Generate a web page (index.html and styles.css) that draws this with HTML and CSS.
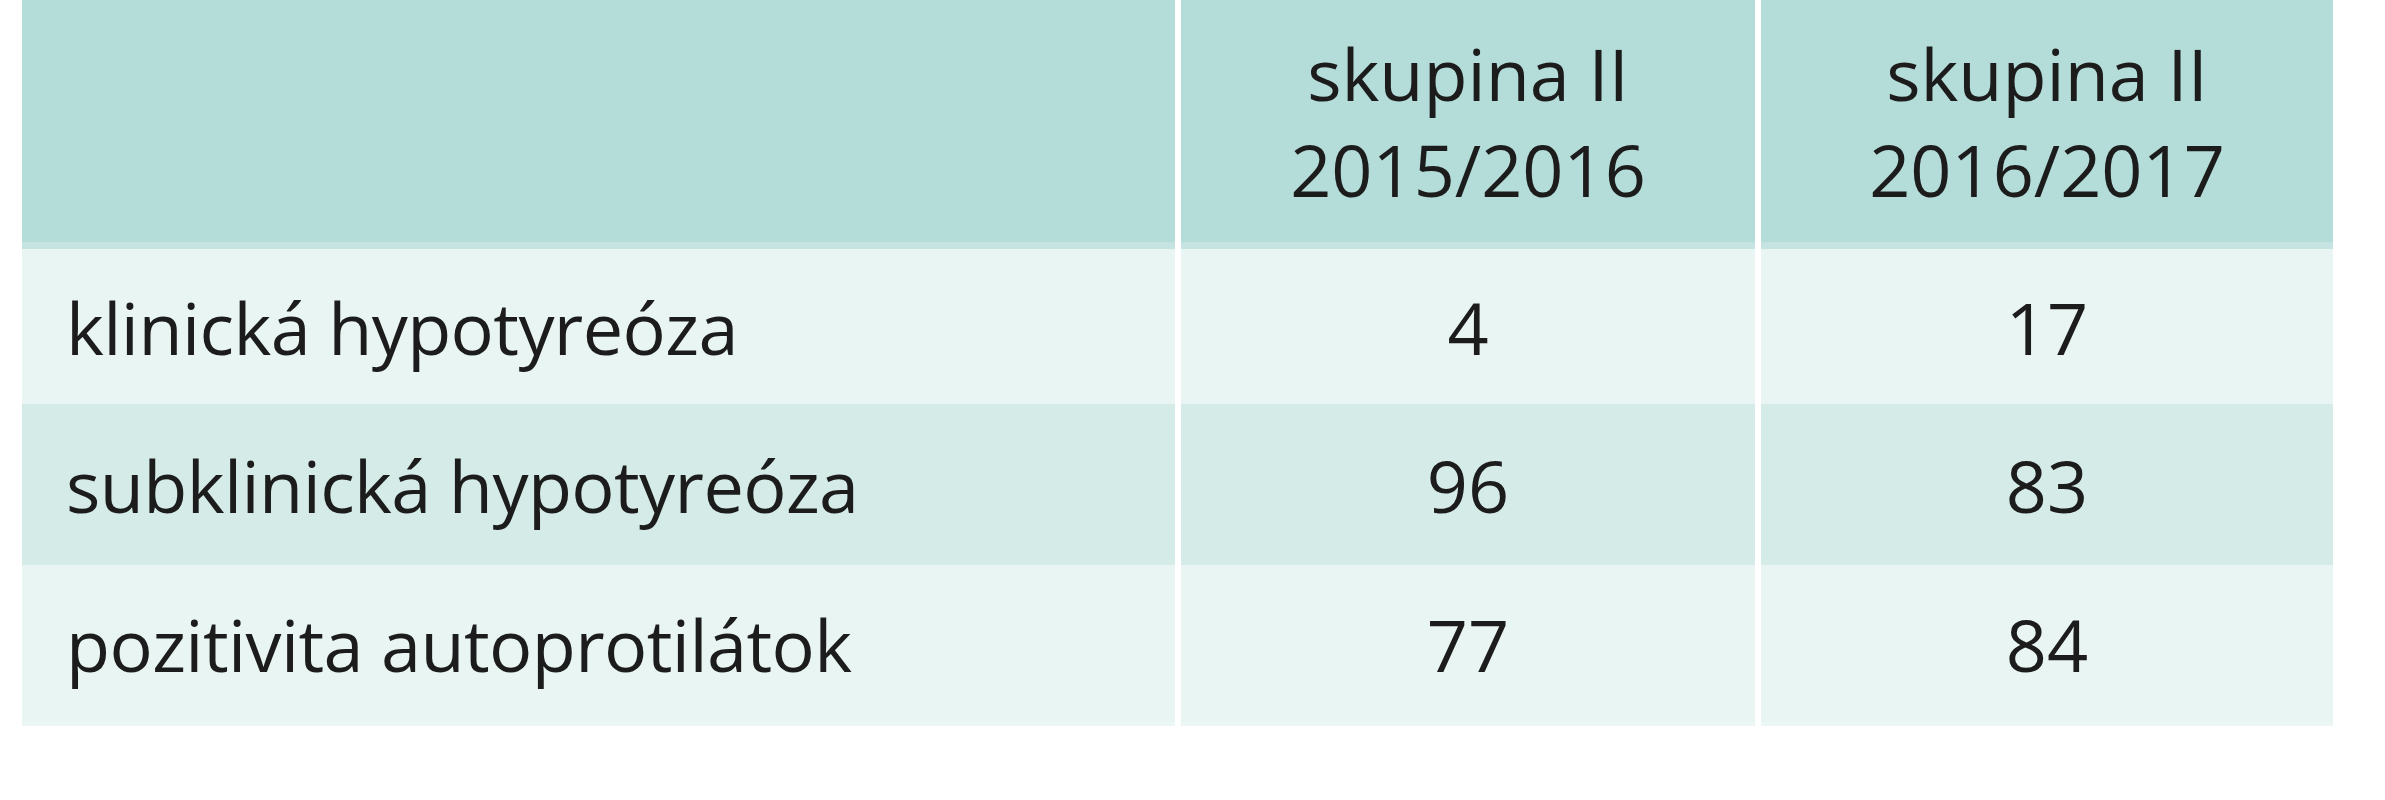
FILE: index.html
```html
<!DOCTYPE html>
<html lang="sk">
<head>
<meta charset="utf-8">
<title>Tabuľka</title>
<link rel="stylesheet" href="styles.css">
</head>
<body>
<div class="table">
  <div class="cell head"></div>
  <div class="cell head num">skupina II<br>2015/2016</div>
  <div class="cell head num">skupina II<br>2016/2017</div>

  <div class="cell r1 label">klinická hypotyreóza</div>
  <div class="cell r1 num">4</div>
  <div class="cell r1 num">17</div>

  <div class="cell r2 label">subklinická hypotyreóza</div>
  <div class="cell r2 num">96</div>
  <div class="cell r2 num">83</div>

  <div class="cell r3 label">pozitivita autoprotilátok</div>
  <div class="cell r3 num">77</div>
  <div class="cell r3 num">84</div>
</div>
</body>
</html>
```
FILE: styles.css
```css
html, body {
  margin: 0;
  padding: 0;
  background: #ffffff;
}

body {
  font-family: "Open Sans", "Noto Sans", sans-serif;
  font-size: 72px;
  line-height: 96px;
  color: #1c1c1c;
}

.table {
  margin-left: 22px;
  width: 2311px;
  display: grid;
  grid-template-columns: 1153px 574px 572px;
  grid-template-rows: 249px 155px 161px 161px;
  column-gap: 6px;
}

.cell {
  display: flex;
  align-items: center;
  box-sizing: border-box;
}

.head {
  background: #b4dcd8;
  border-bottom: 7px solid #c4e3e1;
}

.r1, .r3 {
  background: #e9f5f3;
}

.r2 {
  background: #d5ebe7;
}

.r3 {
  border-bottom: 4px solid #ecf6f5;
}

.label {
  padding-left: 44px;
  letter-spacing: -0.6px;
}

.num {
  justify-content: center;
  text-align: center;
}
```
